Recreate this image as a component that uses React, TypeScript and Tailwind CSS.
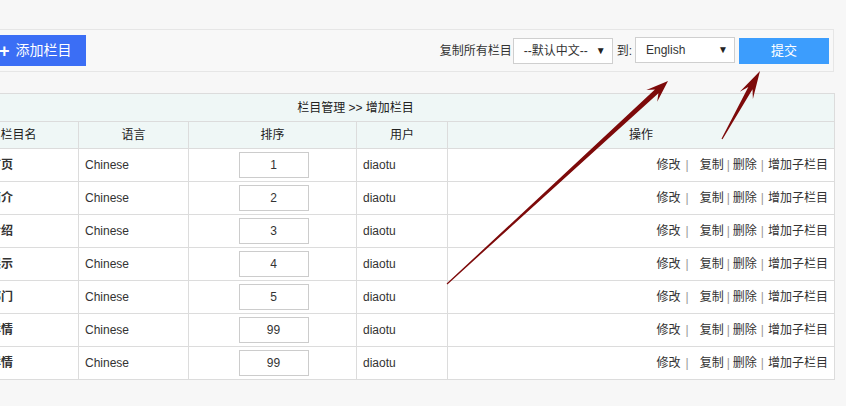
import React from "react";

const rows = [
  { name: "网站首页", order: "1" },
  { name: "公司简介", order: "2" },
  { name: "企业介绍", order: "3" },
  { name: "产品展示", order: "4" },
  { name: "热门部门", order: "5" },
  { name: "新闻详情", order: "99" },
  { name: "产品详情", order: "99" },
];

// polygon for a tapered arrow from tail to tip
function arrow(x1: number, y1: number, x2: number, y2: number, head: number, hw: number, sw: number) {
  const dx = x2 - x1;
  const dy = y2 - y1;
  const len = Math.hypot(dx, dy);
  const ux = dx / len;
  const uy = dy / len;
  const nx = -uy;
  const ny = ux;
  const at = (d: number, w: number) => `${(x1 + ux * d + nx * w).toFixed(1)},${(y1 + uy * d + ny * w).toFixed(1)}`;
  const joint = len - head * 0.7;
  const barb = len - head;
  return [
    at(0, 0.6),
    at(joint, sw),
    at(barb, hw),
    at(len, 0),
    at(barb, -hw),
    at(joint, -sw),
    at(0, -0.6),
  ].join(" ");
}

function Select({ label, w }: { label: string; w: string }) {
  return (
    <div className={`flex h-[26px] ${w} items-center justify-between border border-[#cfcfcf] bg-white pl-[10px] pr-[6px] text-[12px] text-[#333]`}>
      <span>{label}</span>
      <span className="text-[10px] text-[#222]">▼</span>
    </div>
  );
}

export default function App() {
  return (
    <div
      className="relative h-[406px] w-[846px] overflow-hidden bg-[#f7f7f7] text-[12px] text-[#333]"
      style={{ fontFamily: '"Liberation Sans", "Noto Sans CJK SC", sans-serif' }}
    >
      <div className="pt-[29px]">
        <div className="-ml-[20px] mr-[12px] flex h-[43px] items-center justify-between border border-[#e6e6e6] bg-[#f8f8f8] pr-[4px]">
          <button className="ml-[8px] flex h-[31px] items-center gap-[6px] bg-[#3b6ef5] pl-[10px] pr-[14px] text-[14px] text-white">
            <span className="text-[18px] font-bold leading-none">+</span>
            <span>添加栏目</span>
          </button>
          <div className="flex items-center">
            <span className="mr-[1px]">复制所有栏目</span>
            <Select label="--默认中文--" w="w-[100px]" />
            <span className="ml-[4px] mr-[3px]">到:</span>
            <div className="-mt-[2px]">
              <Select label="English" w="w-[100px]" />
            </div>
            <button className="ml-[4px] h-[26px] w-[90px] bg-[#3c9dfd] text-[13px] text-white">提交</button>
          </div>
        </div>

        <table className="-ml-[42px] mt-[21px] w-[876px] table-fixed border-collapse border border-[#dcdcdc]">
          <colgroup>
            <col className="w-[120px]" />
            <col className="w-[110px]" />
            <col className="w-[168px]" />
            <col className="w-[91px]" />
            <col className="w-[387px]" />
          </colgroup>
          <thead className="bg-[#eff7f6] text-[#222]">
            <tr className="h-[28px]">
              <th colSpan={5} className="pr-[82px] text-center font-normal">
                栏目管理 &gt;&gt; 增加栏目
              </th>
            </tr>
            <tr className="h-[27px]">
              <th className="border border-[#dcdcdc] font-normal">栏目名</th>
              <th className="border border-[#dcdcdc] font-normal">语言</th>
              <th className="border border-[#dcdcdc] font-normal">排序</th>
              <th className="border border-[#dcdcdc] font-normal">用户</th>
              <th className="border border-[#dcdcdc] font-normal">操作</th>
            </tr>
          </thead>
          <tbody className="bg-white">
            {rows.map((r, i) => (
              <tr key={i} className="h-[33px]">
                <td className="border border-[#dcdcdc] pl-[6px] font-bold">{r.name}</td>
                <td className="border border-[#dcdcdc] pl-[6px]">Chinese</td>
                <td className="border border-[#dcdcdc]">
                  <div className="mx-auto flex h-[26px] w-[70px] translate-x-[1px] items-center justify-center border border-[#cccccc] bg-white">
                    {r.order}
                  </div>
                </td>
                <td className="border border-[#dcdcdc] pl-[6px]">diaotu</td>
                <td className="border border-[#dcdcdc] pr-[6px] text-right">
                  <span>修改</span>
                  <span className="mx-[5px] text-[#999]">|</span>
                  <span className="ml-[6px]">复制</span>
                  <span className="mx-[3px] text-[#999]">|</span>
                  <span>删除</span>
                  <span className="mx-[4px] text-[#999]">|</span>
                  <span>增加子栏目</span>
                </td>
              </tr>
            ))}
          </tbody>
        </table>
      </div>

      <svg className="pointer-events-none absolute left-0 top-0" width="846" height="406" viewBox="0 0 846 406">
        <polygon points={arrow(447, 284, 668, 81, 22, 8, 2.6)} fill="#7d0a0a" />
        <polygon points={arrow(722, 139, 760, 71, 28, 7.5, 2.4)} fill="#7d0a0a" />
      </svg>
    </div>
  );
}
